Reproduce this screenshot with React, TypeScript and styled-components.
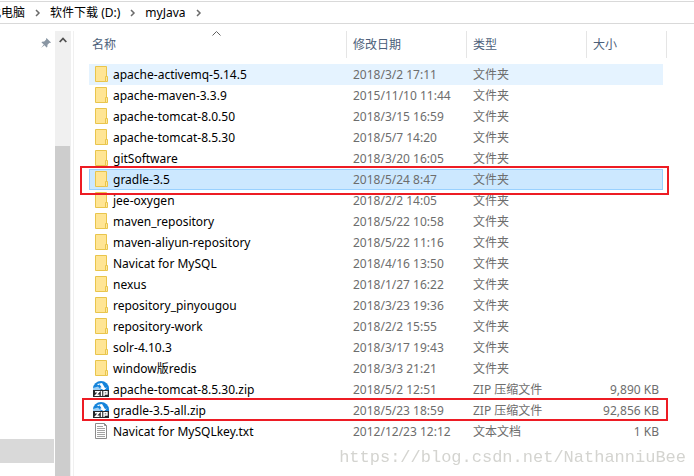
import React from "react";
import styled, { createGlobalStyle, css } from "styled-components";

const GlobalStyle = createGlobalStyle`
  *, *::before, *::after { box-sizing: border-box; }
  html, body, #root { height: 100%; }
  body {
    margin: 0;
    overflow: hidden;
    background: #fff;
    color: #000;
    font: 12px/20px "Noto Sans", "Noto Sans CJK SC", sans-serif;
  }
`;

const Window = styled.div`
  display: flex;
  flex-direction: column;
  height: 100%;
  padding-top: 1px;
`;

const AddressBar = styled.nav`
  flex: none;
  display: flex;
  align-items: center;
  height: 23px;
  border-top: 1px solid #d9d9d9;
  border-bottom: 1px solid #d9d9d9;
  overflow: hidden;
`;

const Crumb = styled.a<{ $clipped?: boolean }>`
  color: #000;
  text-decoration: none;
  white-space: nowrap;
  ${(p) => p.$clipped && css`margin-left: -11px;`}
`;

const CrumbArrow = styled.svg`
  flex: none;
  width: 25px;
  height: 10px;
`;

const Content = styled.div`
  flex: 1;
  display: flex;
  min-height: 0;
`;

const Sidebar = styled.aside`
  flex: none;
  display: flex;
  flex-direction: column;
  justify-content: space-between;
  align-items: flex-end;
  width: 54px;
  padding: 14px 0 13px;
`;

const PinIcon = styled.svg`
  width: 10px;
  height: 10px;
  margin-right: 3px;
`;

const SidebarSelection = styled.div`
  width: 100%;
  height: 24px;
  background: #d9d9d9;
`;

const Scrollbar = styled.div`
  flex: none;
  display: flex;
  flex-direction: column;
  width: 16px;
  margin: 7px 2px 0 1px;
  background: #f0f0f0;
`;

const ScrollUp = styled.button`
  flex: none;
  height: 115px;
  padding: 6px 4px;
  border: 0;
  background: none;
  display: flex;
  align-items: flex-start;
`;

const ScrollThumb = styled.div`
  flex: 1;
  width: 15px;
  background: #cdcdcd;
`;

const FilePane = styled.main`
  flex: 1;
  min-width: 0;
  margin-top: 7px;
  padding: 0 27px 0 15px;
  border-left: 1px solid #f0f0f0;
`;

const FileTable = styled.table`
  display: block;
`;

const TableHead = styled.thead`
  display: block;
  margin-bottom: 6px;
`;

const TableBody = styled.tbody`
  display: block;
`;

const columns = css`
  display: grid;
  grid-template-columns: minmax(0, 1fr) 120px 120px 80px;
`;

const HeadRow = styled.tr`
  ${columns}
  height: 27px;
`;

const HeadCell = styled.th`
  position: relative;
  padding: 4px 0 0 6px;
  border-right: 1px solid #e5e5e5;
  color: #4c607a;
  font-weight: 400;
  text-align: left;

  &:first-child { padding-left: 3px; }
`;

const SortArrow = styled.svg`
  position: absolute;
  top: 0;
  left: calc(50% - 6px);
  width: 9px;
  height: 5px;
`;

type Mark = "wide" | "narrow";

const markInset = { wide: "-3px -6px -5px -9px", narrow: "-2px -5px 0 -7px" };

const FileRow = styled.tr<{ $state?: "hover" | "selected"; $mark?: Mark }>`
  ${columns}
  grid-template-columns: minmax(0, 1fr) 120px 120px 77px;
  position: relative;
  height: 21px;
  margin-right: 4px;
  ${(p) => p.$state === "hover" && css`background: #e5f3ff;`}
  ${(p) =>
    p.$state === "selected" &&
    css`
      background: #cce8ff;
      box-shadow: inset 0 0 0 1px #99d1ff;
    `}
  ${(p) =>
    p.$mark &&
    css`
      &::after {
        content: "";
        position: absolute;
        z-index: 1;
        inset: ${markInset[p.$mark]};
        border: 2px solid #ed1c24;
      }
    `}
`;

const NameCell = styled.td`
  display: flex;
  align-items: flex-start;
  gap: 4px;
  padding: 1px 0 0 4px;
  white-space: nowrap;

  svg {
    flex: none;
    width: 16px;
    height: 16px;
    margin-top: 1px;
  }
`;

const MetaCell = styled.td<{ $right?: boolean }>`
  padding: 1px 4px 0 7px;
  color: #6d6d6d;
  white-space: nowrap;
  text-align: ${(p) => (p.$right ? "right" : "left")};
`;

const Watermark = styled.div`
  position: fixed;
  right: 8px;
  bottom: 6px;
  color: #d4d4d0;
  font: 17px/24px "Liberation Mono", monospace;
`;

const Chevron = () => (
  <CrumbArrow viewBox="0 0 25 10" aria-hidden="true">
    <path d="M11 2l3 3-3 3" fill="none" stroke="#6b6b6b" strokeWidth="1.5" />
  </CrumbArrow>
);

const FolderIcon = () => (
  <svg viewBox="0 0 16 16" aria-hidden="true">
    <path d="M2.5.5h11v15h-11z" fill="#ffe594" stroke="#e9c54c" />
    <path d="M12.500 15.500v-5h2v5z" fill="#ffe89c" stroke="#e9c54c" />
  </svg>
);

const ZipIcon = () => (
  <svg viewBox="0 0 16 16" aria-hidden="true">
    <path d="M0 9V7.500a8 7.500 0 0 1 16 0V9z" fill="#1583da" />
    <path d="M4 3l5-1 3 5 2-.5L11 9.200 6.500 7l2-.7-2-3-1.200 1z" fill="#fff" />
    <path d="M0 7l5-1.500L8 9H0z" fill="#9fd0f5" />
    <path d="M0 9h16v7H0z" fill="#25282b" />
    <path
      d="M2 10.700h4L2.700 14.300H6.500M8.500 10v5M11 15v-4.300h3v2.300h-3"
      fill="none"
      stroke="#fff"
      strokeWidth="1.400"
    />
  </svg>
);

const TextIcon = () => (
  <svg viewBox="0 0 16 16" aria-hidden="true">
    <path d="M2.500.5h9l2 2v13h-11z" fill="#fff" stroke="#8c8c8c" />
    <path d="M11.500.5v2h2" fill="none" stroke="#8c8c8c" />
    <path d="M4 3.500h6M4 5.500h8M4 7.500h8M4 9.500h8M4 11.500h8M4 13.500h8" stroke="#a3a3a3" />
  </svg>
);

const icons = { folder: FolderIcon, zip: ZipIcon, text: TextIcon };
const typeNames = { folder: "文件夹", zip: "ZIP 压缩文件", text: "文本文档" };

interface FileEntry {
  name: string;
  date: string;
  kind: keyof typeof icons;
  size?: string;
  state?: "hover" | "selected";
  mark?: Mark;
}

const files: FileEntry[] = [
  { name: "apache-activemq-5.14.5", date: "2018/3/2 17:11", kind: "folder", state: "hover" },
  { name: "apache-maven-3.3.9", date: "2015/11/10 11:44", kind: "folder" },
  { name: "apache-tomcat-8.0.50", date: "2018/3/15 16:59", kind: "folder" },
  { name: "apache-tomcat-8.5.30", date: "2018/5/7 14:20", kind: "folder" },
  { name: "gitSoftware", date: "2018/3/20 16:05", kind: "folder" },
  { name: "gradle-3.5", date: "2018/5/24 8:47", kind: "folder", state: "selected", mark: "wide" },
  { name: "jee-oxygen", date: "2018/2/2 14:05", kind: "folder" },
  { name: "maven_repository", date: "2018/5/22 10:58", kind: "folder" },
  { name: "maven-aliyun-repository", date: "2018/5/22 11:16", kind: "folder" },
  { name: "Navicat for MySQL", date: "2018/4/16 13:50", kind: "folder" },
  { name: "nexus", date: "2018/1/27 16:22", kind: "folder" },
  { name: "repository_pinyougou", date: "2018/3/23 19:36", kind: "folder" },
  { name: "repository-work", date: "2018/2/2 15:55", kind: "folder" },
  { name: "solr-4.10.3", date: "2018/3/17 19:43", kind: "folder" },
  { name: "window版redis", date: "2018/3/3 21:21", kind: "folder" },
  { name: "apache-tomcat-8.5.30.zip", date: "2018/5/2 12:51", kind: "zip", size: "9,890 KB" },
  { name: "gradle-3.5-all.zip", date: "2018/5/23 18:59", kind: "zip", size: "92,856 KB", mark: "narrow" },
  { name: "Navicat for MySQLkey.txt", date: "2012/12/23 12:12", kind: "text", size: "1 KB" },
];

export default function App() {
  return (
    <Window>
      <GlobalStyle />
      <AddressBar>
        <Crumb href="#" $clipped>此电脑</Crumb>
        <Chevron />
        <Crumb href="#">软件下载 (D:)</Crumb>
        <Chevron />
        <Crumb href="#">myJava</Crumb>
        <Chevron />
      </AddressBar>
      <Content>
        <Sidebar>
          <PinIcon viewBox="0 0 10 10" aria-hidden="true">
            <path d="M5.500 0L10 4.500 9 5 8.500 4.800 6.500 6.800 6.300 9 5.500 9.500 3.500 7.200 0 10 2.800 6.500.5 4.500 1 3.700l2.200-.2 2-2L5 1z" fill="#8996a3" />
          </PinIcon>
          <SidebarSelection />
        </Sidebar>
        <Scrollbar>
          <ScrollUp aria-label="Scroll up">
            <svg width="8" height="6" viewBox="0 0 8 6" aria-hidden="true">
              <path d="M.7 5L4 1.500 7.300 5" fill="none" stroke="#505050" strokeWidth="1.800" />
            </svg>
          </ScrollUp>
          <ScrollThumb />
        </Scrollbar>
        <FilePane>
          <FileTable>
            <TableHead>
              <HeadRow>
                <HeadCell scope="col">
                  <SortArrow viewBox="0 0 9 5" aria-hidden="true">
                    <path d="M.5 4.500l4-4 4 4" fill="none" stroke="#606060" />
                  </SortArrow>
                  名称
                </HeadCell>
                <HeadCell scope="col">修改日期</HeadCell>
                <HeadCell scope="col">类型</HeadCell>
                <HeadCell scope="col">大小</HeadCell>
              </HeadRow>
            </TableHead>
            <TableBody>
              {files.map((file) => {
                const Icon = icons[file.kind];
                return (
                  <FileRow key={file.name} $state={file.state} $mark={file.mark}>
                    <NameCell><Icon />{file.name}</NameCell>
                    <MetaCell>{file.date}</MetaCell>
                    <MetaCell>{typeNames[file.kind]}</MetaCell>
                    <MetaCell $right>{file.size}</MetaCell>
                  </FileRow>
                );
              })}
            </TableBody>
          </FileTable>
        </FilePane>
      </Content>
      <Watermark>https://blog.csdn.net/NathanniuBee</Watermark>
    </Window>
  );
}
